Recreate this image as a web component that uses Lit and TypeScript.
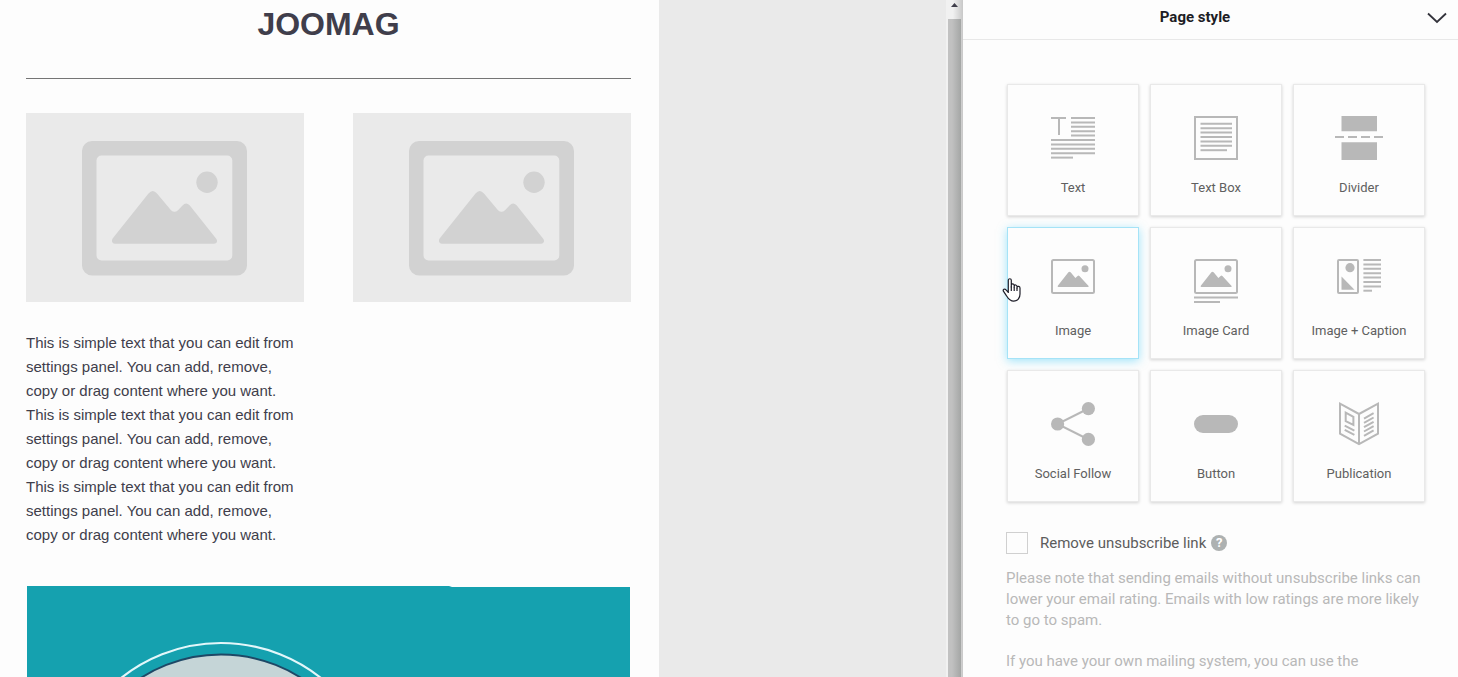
import { LitElement, html, svg, css, nothing } from "lit";
import { customElement, property, state } from "lit/decorators.js";
import { classMap } from "lit/directives/class-map.js";

const rows = (x1: number, x2: number, ys: number[]) =>
  svg`<path class="line" d=${ys.map((y) => `M${x1} ${y}H${x2}`).join("")}></path>`;

const picture = svg`
  <rect class="line" x="3" y="3" width="42" height="33" rx="1.5"></rect>
  <circle cx="36" cy="11.7" r="3.5"></circle>
  <path d="M9.4 30C8.6 30 8.4 29.2 9 28.5L19.4 15.3Q20.5 14.2 21.6 15.3L26.4 21L28.6 18.9Q29.5 18 30.4 18.9L39.6 29Q39.9 30 39 30Z"></path>`;

const icons: Record<string, unknown> = {
  text: svg`
    <path class="line" d="M2 4H17M10 4V21"></path>
    ${rows(22, 46, [4, 8.4, 12.8, 17.2, 21.6])}
    ${rows(2, 46, [26, 30.4, 34.8, 39.2])}
    ${rows(2, 24, [43.6])}`,
  textBox: svg`
    <rect class="line" x="3" y="3" width="42" height="42"></rect>
    ${rows(8.5, 40, [9.8, 14.2, 18.6, 23, 27.4, 31.8])}
    ${rows(8.5, 35, [36.2])}`,
  divider: svg`
    <path d="M6.5 2H42V17.3H6.5ZM6.5 28.3H42V46H6.5Z"></path>
    <path class="line" d="M0 23H9M13 23H22M26 23H35M39 23H48"></path>`,
  image: picture,
  imageCard: svg`${picture}${rows(2, 46, [40.5])}${rows(2, 28, [45])}`,
  imageCaption: svg`
    <rect class="line" x="3" y="3" width="20" height="33" rx="1"></rect>
    <circle cx="15" cy="10.7" r="4.6"></circle>
    <path d="M6.5 19.5L19.5 32.7H6.5Z"></path>
    ${rows(28.4, 46, [3, 7.4, 11.8, 16.2, 20.6, 25, 29.4])}
    ${rows(28.4, 37, [33.7])}`,
  social: svg`
    <path class="line" d="M39.5 8.5L8.5 24L39.5 39.5"></path>
    <circle cx="8.6" cy="24" r="6.6"></circle>
    <circle cx="39.4" cy="8.6" r="6.6"></circle>
    <circle cx="39.4" cy="39.4" r="6.6"></circle>`,
  button: svg`<rect x="2" y="15" width="44" height="18" rx="9"></rect>`,
  publication: svg`
    <path class="line" d="M5 3.6L24 14L43 3.6V33.6L24 44.2L5 33.6ZM24 14V44"></path>
    <path class="line" d="M10.7 12.7L18.4 16.8V25L10.7 21.2Z"></path>
    <path class="line" d="M9.7 25.6L19.4 30.6M9.7 29.8L19.4 34.8M29 18.6L38.6 13.2M29 22.9L38.6 17.5M29 27.2L38.6 21.8M29 31.5L38.6 26.1M29 35.8L38.6 30.4"></path>`,
};

const blocks = [
  { icon: "text", label: "Text" },
  { icon: "textBox", label: "Text Box" },
  { icon: "divider", label: "Divider" },
  { icon: "image", label: "Image" },
  { icon: "imageCard", label: "Image Card" },
  { icon: "imageCaption", label: "Image + Caption" },
  { icon: "social", label: "Social Follow" },
  { icon: "button", label: "Button" },
  { icon: "publication", label: "Publication" },
];

@customElement("block-tile")
class BlockTile extends LitElement {
  @property() icon = "";
  @property() label = "";
  @property({ type: Boolean }) active = false;

  static styles = css`
    :host {
      display: block;
      position: relative;
    }
    .tile {
      box-sizing: border-box;
      width: 100%;
      height: 132px;
      display: flex;
      flex-direction: column;
      align-items: center;
      gap: 18px;
      padding: 29px 0 0;
      border: 1px solid #e9e9e9;
      background: #fdfdfd;
      box-shadow: 0 1px 3px rgba(0, 0, 0, 0.17);
      font: 13px/16px Roboto, sans-serif;
      color: #606060;
      cursor: pointer;
    }
    .active {
      border-color: #a5e3f7;
      box-shadow: 0 2px 9px rgba(70, 205, 250, 0.5);
    }
    .icon {
      width: 48px;
      height: 48px;
      fill: #b8b8b8;
    }
    .line {
      fill: none;
      stroke: #b8b8b8;
      stroke-width: 2;
    }
    .cursor {
      position: absolute;
      left: -5px;
      top: 50px;
      width: 20px;
      height: 26px;
      pointer-events: none;
    }
  `;

  render() {
    return html`
      <button class=${classMap({ tile: true, active: this.active })}>
        <svg class="icon" viewBox="0 0 48 48" aria-hidden="true">${icons[this.icon]}</svg>
        <span>${this.label}</span>
      </button>
      ${this.active
        ? html`<svg class="cursor" viewBox="0 0 20 26" aria-hidden="true">
            <path
              d="M6.3 16V3.3C6.3 1.2 9.3 1.2 9.3 3.3V10V8.2C9.6 6.3 12.2 6.6 12.2 8.6V10V9C12.6 7.4 15 7.7 15 9.6V11V10.2C15.6 8.8 18 9.2 18 11V17C18 20.5 16 24.2 11.8 24.2C7.5 24.2 6 21.3 4.2 18.3L1.4 14.2C.6 12.6 2.6 11.3 4 12.8L6.3 15.4"
              fill="#fff" stroke="#1d1d28" stroke-width="1.2" stroke-linejoin="round"></path>
            <path d="M9.3 9.5V14M12.2 10V14M15 11V14" stroke="#1d1d28" stroke-width="1.2"></path>
          </svg>`
        : nothing}
    `;
  }
}

@customElement("image-placeholder")
class ImagePlaceholder extends LitElement {
  static styles = css`
    :host {
      display: block;
      background: #eaeaea;
    }
    .art {
      display: block;
      width: 100%;
      fill: #d2d2d2;
    }
  `;

  render() {
    return html`<svg class="art" viewBox="0 0 278 189" role="img" aria-label="Image placeholder">
      <path
        fill-rule="evenodd"
        d="M66 28H211A10 10 0 0 1 221 38V152.5A10 10 0 0 1 211 162.5H66A10 10 0 0 1 56 152.5V38A10 10 0 0 1 66 28ZM75.5 42.5A5 5 0 0 0 70.5 47.5V142.5A5 5 0 0 0 75.5 147.5H201.3A5 5 0 0 0 206.3 142.5V47.5A5 5 0 0 0 201.3 42.5Z"></path>
      <circle cx="181" cy="69.3" r="10.7"></circle>
      <path
        d="M89 130.7C86 130.7 85 127.5 87 125L122.5 80.5Q126.7 75.5 131 80.5L145 97.2Q148.5 100.5 152 97.2L156.5 92.5Q160 88.5 163.8 92.5L190 125.5C192 128 191 130.7 188 130.7Z"></path>
    </svg>`;
  }
}

@customElement("app-root")
class AppRoot extends LitElement {
  @state() private removeLink = false;

  static styles = css`
    :host {
      display: flex;
      height: 100vh;
      overflow: hidden;
      background: #fdfdfd;
      font-family: Roboto, sans-serif;
    }
    .canvas {
      flex: 1;
      min-width: 0;
      display: flex;
      background: #eaeaea;
    }
    .sheet {
      box-sizing: border-box;
      flex: 0 1 659px;
      padding: 0 28px 0 26px;
      background: #fdfdfd;
      color: #403e4b;
      font-family: "Liberation Sans", Arial, sans-serif;
    }
    .brand {
      margin: 0;
      padding: 4px 0 34px;
      border-bottom: 1px solid #757575;
      font-size: 32px;
      line-height: 40px;
      text-align: center;
    }
    .columns {
      display: grid;
      grid-template-columns: 1fr 1fr;
      column-gap: 49px;
      margin-top: 34px;
    }
    .copy {
      margin: 29px 0 39px;
      font-size: 15px;
      line-height: 24px;
    }
    .hero {
      display: block;
      margin: 0 1px;
    }
    .scrollbar {
      flex: none;
      width: 17px;
      display: flex;
      flex-direction: column;
      align-items: center;
      background: linear-gradient(90deg, #f1f1f1 0 40%, #c8c8c8);
    }
    .arrow {
      width: 13px;
      height: 19px;
      flex: none;
    }
    .thumb {
      flex: 1;
      width: 13px;
      background: linear-gradient(90deg, #c1c1c1 30%, #a4a6a5);
    }
    .panel {
      flex: 0 0 495px;
      background: #fdfdfd;
    }
    .header {
      display: flex;
      align-items: center;
      height: 39px;
      border-bottom: 1px solid #e8e8e8;
    }
    .title {
      flex: 1;
      margin: 0;
      padding-bottom: 5px;
      font-size: 15px;
      line-height: 20px;
      font-weight: 700;
      text-align: center;
      color: #1d1d25;
    }
    .toggle {
      width: 31px;
      height: 36px;
      padding: 0 0 3px;
      border: 0;
      background: none;
      text-align: left;
      cursor: pointer;
    }
    .chevron {
      display: block;
      width: 20px;
      height: 12px;
    }
    .body {
      padding: 44px 33px 0 43px;
    }
    .grid {
      display: grid;
      grid-template-columns: repeat(3, 1fr);
      gap: 11px;
      padding-left: 1px;
    }
    .option {
      display: flex;
      align-items: center;
      margin-top: 30px;
      font-size: 15px;
      line-height: 22px;
      color: #5c5c5c;
    }
    .check {
      box-sizing: border-box;
      appearance: none;
      width: 22px;
      height: 22px;
      margin: 0 12px 0 0;
      border: 1px solid #d0d0d0;
      background: #fdfdfd;
    }
    .check:checked {
      background: #a5e3f7;
    }
    .help {
      width: 16px;
      height: 16px;
      margin-left: 5px;
      padding: 0;
      border: 0;
      border-radius: 50%;
      background: #adb1b1;
      color: #fff;
      font: 700 13px/16px Roboto, sans-serif;
    }
    .note {
      margin: 0 0 20px;
      font-size: 15px;
      line-height: 21px;
      color: #b8b8b8;
    }
    .option + .note {
      margin-top: 14px;
    }
  `;

  render() {
    const sentence =
      "This is simple text that you can edit from settings panel. You can add, remove, copy or drag content where you want.";
    return html`
      <main class="canvas">
        <article class="sheet">
          <h1 class="brand">JOOMAG</h1>
          <div class="columns">
            <div>
              <image-placeholder></image-placeholder>
              <p class="copy">${sentence}<br />${sentence}<br />${sentence}</p>
            </div>
            <div><image-placeholder></image-placeholder></div>
          </div>
          <svg class="hero" viewBox="0 0 603 300" role="img" aria-label="Cover artwork">
            <path d="M0 0H422L425 1H603V300H0Z" fill="#15a1af"></path>
            <circle cx="194" cy="217" r="160" fill="none" stroke="#e3f7fa" stroke-width="2.2"></circle>
            <circle cx="194" cy="217" r="148.5" fill="#c5d5d7" stroke="#1e4866" stroke-width="2"></circle>
          </svg>
        </article>
      </main>
      <div class="scrollbar" aria-hidden="true">
        <svg class="arrow" viewBox="0 0 13 19"><path d="M3 7L6.5 3L10 7Z" fill="#403e4b"></path></svg>
        <div class="thumb"></div>
      </div>
      <aside class="panel">
        <header class="header">
          <h2 class="title">Page style</h2>
          <button class="toggle" aria-label="Expand page style">
            <svg class="chevron" viewBox="0 0 20 12">
              <path d="M1 1.5L10 10L19 1.5" fill="none" stroke="#33333b" stroke-width="1.8"></path>
            </svg>
          </button>
        </header>
        <div class="body">
          <div class="grid">
            ${blocks.map(
              (b) => html`<block-tile .icon=${b.icon} .label=${b.label} ?active=${b.icon === "image"}></block-tile>`
            )}
          </div>
          <div class="option">
            <input class="check" id="remove" type="checkbox" .checked=${this.removeLink}
              @change=${() => (this.removeLink = !this.removeLink)} />
            <label for="remove">Remove unsubscribe link</label>
            <button class="help" aria-label="Help">?</button>
          </div>
          <p class="note">
            Please note that sending emails without unsubscribe links can lower your email rating. Emails with low
            ratings are more likely to go to spam.
          </p>
          <p class="note">If you have your own mailing system, you can use the</p>
        </div>
      </aside>
    `;
  }
}
